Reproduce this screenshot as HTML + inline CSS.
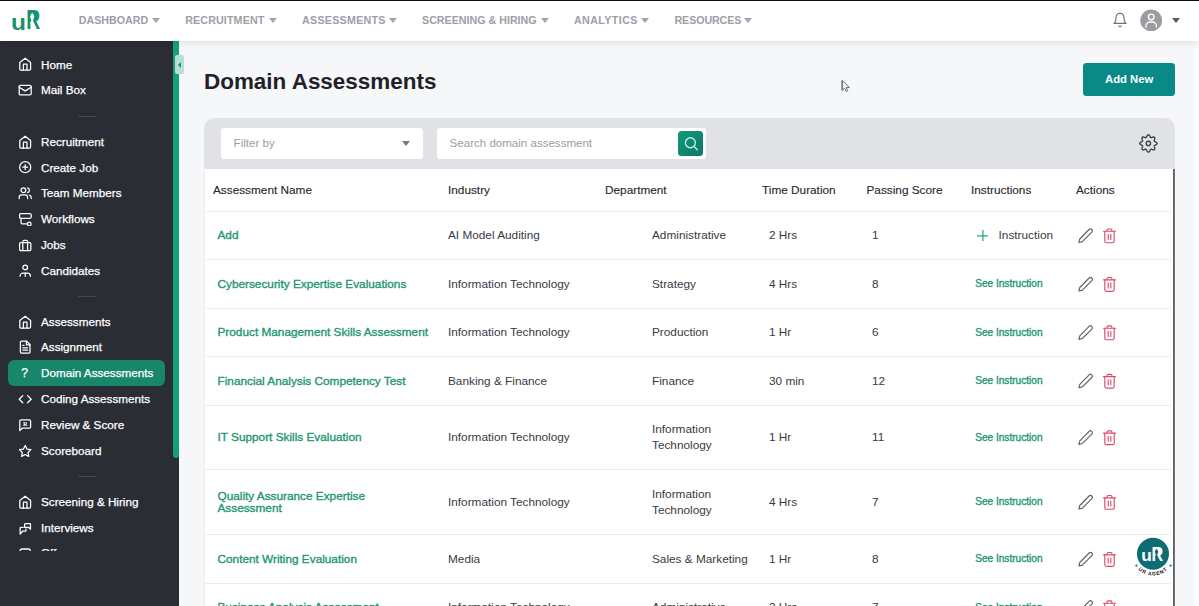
<!DOCTYPE html>
<html lang="en">
<head>
<meta charset="utf-8">
<title>Domain Assessments</title>
<style>
*{box-sizing:border-box;margin:0;padding:0}
html,body{width:1199px;height:606px;overflow:hidden}
body{position:relative;background:#f6f7f9;font-family:"Liberation Sans",sans-serif;color:#2a2c34}
.abs{position:absolute}
#topline{left:0;top:0;width:1199px;height:1px;background:#0c0c0e;z-index:9}
#rstrip{left:1194px;top:41px;width:5px;height:565px;background:#f9fafb}
#header{left:0;top:1px;width:1199px;height:40px;background:#fff;box-shadow:0 2px 7px rgba(0,0,0,.09);z-index:5}
.nav{position:absolute;top:12.2px;font-size:10.7px;font-weight:700;color:#9c9ea7;white-space:nowrap;line-height:14px}
.nav i{position:absolute;top:4.6px;margin-left:-.5px;width:0;height:0;border-left:4.1px solid transparent;border-right:4.1px solid transparent;border-top:5.2px solid #a3a5ad}
#logo{left:0;top:-1px;width:50px;height:41px}
#bell{left:1111.6px;top:10.8px;width:16px;height:16px;fill:none;stroke:#707074;stroke-width:1.75;stroke-linecap:round;stroke-linejoin:round}
#avatar{left:1139px;top:6px;width:24px;height:24px}
#ucaret{left:1171.6px;top:16.8px;width:0;height:0;border-left:4.1px solid transparent;border-right:4.1px solid transparent;border-top:5.4px solid #5a5a5e}
#sidebar{left:0;top:41px;width:179px;height:565px;background:#2b2d35;z-index:2}
#sblist{position:absolute;left:0;top:0;width:173px;height:510.2px;overflow:hidden}
.si{position:absolute;left:8px;width:157px;height:26px;border-radius:6px;color:#fff;font-size:11.7px;line-height:26px;white-space:nowrap;-webkit-text-stroke:.25px #fff}
.si span{position:absolute;left:33px;top:0}
.si svg{position:absolute;left:9.8px;top:5.9px;fill:none;stroke:#fff;stroke-width:2.1;stroke-linecap:round;stroke-linejoin:round}
.si .q{position:absolute;left:8.6px;top:0;width:16px;text-align:center;font-weight:400;font-size:12px}
.si.act{background:#17866b}
.sep{position:absolute;left:77.5px;width:18.5px;height:1px;background:#44474f}
#sbthumb{left:173px;top:41px;width:6px;height:417px;background:#13a07b;border-radius:0 0 3px 3px;z-index:3}
#toggle{left:175px;top:55px;width:9px;height:19px;background:#b7dfd3;border-radius:2px;z-index:6}
#toggle i{position:absolute;left:2.5px;top:6.5px;width:0;height:0;border-top:3px solid transparent;border-bottom:3px solid transparent;border-right:3.5px solid #17936f}
h1{left:204px;top:67.6px;font-size:22.45px;font-weight:700;color:#1f2129;line-height:28px;white-space:nowrap}
#addnew{left:1083px;top:62.5px;width:92.3px;height:33.4px;background:#0a8a87;border-radius:3.5px;color:#fff;font-weight:700;font-size:11.3px;line-height:33.4px;text-align:center}
#cursor{left:840px;top:79px;width:12px;height:15px;z-index:8}
#card{left:204px;top:118px;width:971.3px;height:500px;background:#fff;border-radius:10px 10px 0 0;overflow:hidden}
#bar{left:0;top:0;width:972px;height:50.5px;background:#e1e2e6}
.inp{position:absolute;top:10.4px;height:30.4px;background:#fff;border-radius:3px;font-size:11.55px;color:#9a9ca3;line-height:30.4px;padding-left:12.6px;white-space:nowrap}
#fcaret{left:197.5px;top:23.4px;width:0;height:0;border-left:4px solid transparent;border-right:4px solid transparent;border-top:5px solid #77797f}
#sbtn{left:474px;top:13px;width:25.2px;height:25.2px;border-radius:3.5px;background:linear-gradient(135deg,#13997b,#0b7868)}
#sbtn svg{position:absolute;left:4.6px;top:4.6px;width:16px;height:16px;fill:none;stroke:#c3f3e3;stroke-width:1.35;stroke-linecap:round}
#gear{left:934px;top:15px;width:20px;height:20px;fill:none;stroke:#3b3d43;stroke-width:1.35;stroke-linejoin:round}
.c{position:absolute;font-size:11.8px;color:#383a42;white-space:nowrap}
.th{color:#26282f;-webkit-text-stroke:.12px #26282f}
.nm{color:#1f9674;-webkit-text-stroke:.35px #1f9674}
.see{color:#1f9674;font-size:10.1px;margin-top:.5px;-webkit-text-stroke:.35px #1f9674}
.bd{position:absolute;left:0;width:967px;height:1px;background:#ebecef}
.ic{position:absolute;fill:none;stroke-width:1.15;stroke-linecap:round;stroke-linejoin:round}
.pen{stroke:#606165}
.tr{stroke:#de4a6b}
.plus{position:absolute;fill:none;stroke:#27a683;stroke-width:1.25;stroke-linecap:round}
#vline{left:969px;top:50.6px;width:2px;height:450px;background:linear-gradient(90deg,#58595c,#7a7b7e)}
#agent{left:1130px;top:533px;width:46px;height:46px;z-index:7}
</style>
</head>
<body>
<div id="topline" class="abs"></div>
<div id="rstrip" class="abs"></div>
<div id="header" class="abs">
  <svg id="logo" class="abs" viewBox="0 0 50 41" width="50" height="41">
    <text x="11" y="29.9" font-family="Liberation Sans,sans-serif" font-weight="700" font-size="22.3" fill="#17936f" textLength="15" lengthAdjust="spacingAndGlyphs">u</text>
    <text x="26.3" y="29.4" font-family="Liberation Sans,sans-serif" font-weight="700" font-size="27" fill="#17936f" textLength="14" lengthAdjust="spacingAndGlyphs">R</text>
    <path d="M30 12.5h7v8.6h-7z" fill="#17936f"/>
    <path d="M32.2 12.4L34.4 16.3 33.1 20.6 33.4 23.2H30.2L31.3 20.6 30 16.3z" fill="#fff"/>
  </svg>
  <div class="nav" style="left:78.8px">DASHBOARD<i style="left:73.8px"></i></div>
  <div class="nav" style="left:185.2px;letter-spacing:.13px">RECRUITMENT<i style="left:84.6px"></i></div>
  <div class="nav" style="left:302px;letter-spacing:.27px">ASSESSMENTS<i style="left:87.3px"></i></div>
  <div class="nav" style="left:422px">SCREENING &amp; HIRING<i style="left:119px"></i></div>
  <div class="nav" style="left:574px;letter-spacing:.4px">ANALYTICS<i style="left:67px"></i></div>
  <div class="nav" style="left:674.5px;letter-spacing:-.1px">RESOURCES<i style="left:70.3px"></i></div>
  <svg id="bell" class="abs" viewBox="0 0 24 24"><path d="M6 8a6 6 0 0 1 12 0c0 7 3 9 3 9H3s3-2 3-9"/><path d="M10.3 21a1.94 1.94 0 0 0 3.4 0"/></svg>
  <svg id="avatar" class="abs" viewBox="0 0 24 24"><circle cx="12.2" cy="13.4" r="10.9" fill="#9a9ca0"/><g transform="translate(4.2 5.3) scale(.667)" fill="none" stroke="#fff" stroke-width="2" stroke-linecap="round"><circle cx="12" cy="7" r="4.2"/><path d="M4.2 22.2v-1.7a6 6 0 0 1 6-6h3.6a6 6 0 0 1 6 6v1.7"/></g></svg>
  <div id="ucaret" class="abs"></div>
</div>
<div id="sidebar" class="abs">
  <div id="sblist">
    <div class="si" style="top:10.60px"><svg viewBox="0 0 24 24" width="14.4" height="14.4" ><path d="m3 9 9-7 9 7v11a2 2 0 0 1-2 2H5a2 2 0 0 1-2-2z"/><path d="M9 22V12h6v10"/></svg><span>Home</span></div>
    <div class="si" style="top:36.34px"><svg viewBox="0 0 24 24" width="14.4" height="14.4" ><rect width="20" height="16" x="2" y="4" rx="2"/><path d="m22 7-8.97 5.7a1.94 1.94 0 0 1-2.06 0L2 7"/></svg><span>Mail Box</span></div>
    <div class="si" style="top:87.83px"><svg viewBox="0 0 24 24" width="14.4" height="14.4" ><path d="m3 9 9-7 9 7v11a2 2 0 0 1-2 2H5a2 2 0 0 1-2-2z"/><path d="M9 22V12h6v10"/></svg><span>Recruitment</span></div>
    <div class="si" style="top:113.58px"><svg viewBox="0 0 24 24" width="14.4" height="14.4" ><circle cx="12" cy="12" r="9.2"/><path d="M8 12h8"/><path d="M12 8v8"/></svg><span>Create Job</span></div>
    <div class="si" style="top:139.32px"><svg viewBox="0 0 24 24" width="14.4" height="14.4" ><path d="M16 21v-2a4 4 0 0 0-4-4H6a4 4 0 0 0-4 4v2"/><circle cx="9" cy="7" r="4"/><path d="M22 21v-2a4 4 0 0 0-3-3.87"/><path d="M16 3.13a4 4 0 0 1 0 7.75"/></svg><span>Team Members</span></div>
    <div class="si" style="top:165.07px"><svg viewBox="0 0 24 24" width="14.4" height="14.4" ><rect x="2.7" y="2.8" width="19.3" height="7.7" rx="2"/><path d="M5 10.5v7a2.5 2.5 0 0 0 2.5 2.5h8"/><circle cx="18.8" cy="20" r="3"/></svg><span>Workflows</span></div>
    <div class="si" style="top:190.81px"><svg viewBox="0 0 24 24" width="14.4" height="14.4" ><rect width="18.7" height="13.5" x="2.7" y="7.7" rx="2"/><path d="M16 21V6a2 2 0 0 0-2-2h-4a2 2 0 0 0-2 2v15"/></svg><span>Jobs</span></div>
    <div class="si" style="top:216.56px"><svg viewBox="0 0 24 24" width="14.4" height="14.4" ><circle cx="12" cy="7.3" r="3.9"/><path d="M3.3 22.3V22a5 5 0 0 1 5-5h7.4a5 5 0 0 1 5 5v.3"/><path d="M12 17v5.3"/></svg><span>Candidates</span></div>
    <div class="si" style="top:268.05px"><svg viewBox="0 0 24 24" width="14.4" height="14.4" ><path d="m3 9 9-7 9 7v11a2 2 0 0 1-2 2H5a2 2 0 0 1-2-2z"/><path d="M9 22V12h6v10"/></svg><span>Assessments</span></div>
    <div class="si" style="top:293.19px"><svg viewBox="0 0 24 24" width="14.4" height="14.4" ><path d="M14.5 2H6a2 2 0 0 0-2 2v16a2 2 0 0 0 2 2h12a2 2 0 0 0 2-2V7.5L14.5 2z"/><path d="M14 2v6h6"/><path d="M16 13H8"/><path d="M16 17H8"/><path d="M10 9H8"/></svg><span>Assignment</span></div>
    <div class="si act" style="top:318.94px"><b class="q">?</b><span>Domain Assessments</span></div>
    <div class="si" style="top:345.28px"><svg viewBox="0 0 24 24" width="14.4" height="14.4" ><path d="m16 18 6-6-6-6"/><path d="m8 6-6 6 6 6"/></svg><span>Coding Assessments</span></div>
    <div class="si" style="top:371.03px"><svg viewBox="0 0 24 24" width="14.4" height="14.4" ><path d="M21 15a2 2 0 0 1-2 2H7l-4 4V5a2 2 0 0 1 2-2h14a2 2 0 0 1 2 2z"/><text x="12" y="13.8" text-anchor="middle" font-family="Liberation Serif,serif" font-size="10.5" font-weight="700" fill="#fff" stroke="none">R</text></svg><span>Review &amp; Score</span></div>
    <div class="si" style="top:396.77px"><svg viewBox="0 0 24 24" width="14.4" height="14.4" ><path d="M12 2.5l2.95 5.98 6.6.96-4.78 4.65 1.13 6.57L12 17.56 6.1 20.66l1.13-6.57L2.45 9.44l6.6-.96z"/></svg><span>Scoreboard</span></div>
    <div class="si" style="top:448.26px"><svg viewBox="0 0 24 24" width="14.4" height="14.4" ><path d="m3 9 9-7 9 7v11a2 2 0 0 1-2 2H5a2 2 0 0 1-2-2z"/><path d="M9 22V12h6v10"/></svg><span>Screening &amp; Hiring</span></div>
    <div class="si" style="top:474.01px"><svg viewBox="0 0 24 24" width="14.4" height="14.4" ><path d="M12 4.5h7.8a1 1 0 0 1 1 1v8.3l-3-3H12a1 1 0 0 1-1-1V5.5a1 1 0 0 1 1-1z"/><path d="M8.6 10.7h-4a1 1 0 0 0-1 1v10l4.6-5h4.1a1 1 0 0 0 1-1v-2.5"/></svg><span>Interviews</span></div>
    <div class="si" style="top:499.15px"><svg viewBox="0 0 24 24" width="14.4" height="14.4" ><rect x="3.5" y="5" width="17" height="14" rx="3"/></svg><span>Offers</span></div>
    <div class="sep" style="top:74.89px"></div>
    <div class="sep" style="top:255.11px"></div>
    <div class="sep" style="top:435.32px"></div>
  </div>
</div>
<div id="sbthumb" class="abs"></div>
<div id="toggle" class="abs"><i></i></div>
<h1 class="abs">Domain Assessments</h1>
<div id="addnew" class="abs">Add New</div>
<svg id="cursor" class="abs" viewBox="0 0 12 15"><path d="M2.1 1.4V11.4L4.6 9.2l1.7 3.3 1.5-.8L6.2 8.6l3.2-.1z" fill="#fafbfc" stroke="#6a6b6f" stroke-width="1" stroke-linejoin="round"/><path d="M2.2 1.6V11.2" stroke="#6e6f73" stroke-width="1.2"/></svg>
<div id="card" class="abs">
  <div id="bar" class="abs">
    <div class="inp" style="left:17px;width:202px">Filter by</div>
    <div id="fcaret" class="abs"></div>
    <div class="inp" style="left:233px;width:268.6px">Search domain assessment</div>
    <div id="sbtn" class="abs"><svg viewBox="0 0 16 16"><circle cx="7.4" cy="6.7" r="5"/><path d="M11.1 10.4l3.2 3.4"/></svg></div>
    <svg id="gear" class="abs" viewBox="0 0 20 20"><path d="M10.40 1.72 L10.74 1.82 L11.06 2.04 L11.36 2.34 L11.62 2.72 L11.85 3.12 L12.05 3.53 L12.24 3.91 L12.41 4.22 L12.60 4.46 L12.81 4.60 L13.06 4.65 L13.36 4.61 L13.71 4.52 L14.10 4.38 L14.53 4.23 L14.99 4.11 L15.44 4.03 L15.86 4.03 L16.24 4.10 L16.55 4.27 L16.72 4.58 L16.79 4.96 L16.79 5.38 L16.71 5.83 L16.59 6.29 L16.44 6.72 L16.30 7.11 L16.21 7.46 L16.17 7.76 L16.22 8.01 L16.36 8.22 L16.60 8.41 L16.91 8.58 L17.29 8.77 L17.70 8.97 L18.10 9.20 L18.48 9.46 L18.78 9.76 L19.00 10.08 L19.10 10.42 L19.00 10.76 L18.78 11.08 L18.48 11.38 L18.10 11.64 L17.70 11.87 L17.29 12.07 L16.91 12.26 L16.60 12.43 L16.36 12.62 L16.22 12.83 L16.17 13.08 L16.21 13.38 L16.30 13.73 L16.44 14.12 L16.59 14.55 L16.71 15.01 L16.79 15.46 L16.79 15.88 L16.72 16.26 L16.55 16.57 L16.24 16.74 L15.86 16.81 L15.44 16.81 L14.99 16.73 L14.53 16.61 L14.10 16.46 L13.71 16.32 L13.36 16.23 L13.06 16.19 L12.81 16.24 L12.60 16.38 L12.41 16.62 L12.24 16.93 L12.05 17.31 L11.85 17.72 L11.62 18.12 L11.36 18.50 L11.06 18.80 L10.74 19.02 L10.40 19.12 L10.06 19.02 L9.74 18.80 L9.44 18.50 L9.18 18.12 L8.95 17.72 L8.75 17.31 L8.56 16.93 L8.39 16.62 L8.20 16.38 L7.99 16.24 L7.74 16.19 L7.44 16.23 L7.09 16.32 L6.70 16.46 L6.27 16.61 L5.81 16.73 L5.36 16.81 L4.94 16.81 L4.56 16.74 L4.25 16.57 L4.08 16.26 L4.01 15.88 L4.01 15.46 L4.09 15.01 L4.21 14.55 L4.36 14.12 L4.50 13.73 L4.59 13.38 L4.63 13.08 L4.58 12.83 L4.44 12.62 L4.20 12.43 L3.89 12.26 L3.51 12.07 L3.10 11.87 L2.70 11.64 L2.32 11.38 L2.02 11.08 L1.80 10.76 L1.70 10.42 L1.80 10.08 L2.02 9.76 L2.32 9.46 L2.70 9.20 L3.10 8.97 L3.51 8.77 L3.89 8.58 L4.20 8.41 L4.44 8.22 L4.58 8.01 L4.63 7.76 L4.59 7.46 L4.50 7.11 L4.36 6.72 L4.21 6.29 L4.09 5.83 L4.01 5.38 L4.01 4.96 L4.08 4.58 L4.25 4.27 L4.56 4.10 L4.94 4.03 L5.36 4.03 L5.81 4.11 L6.27 4.23 L6.70 4.38 L7.09 4.52 L7.44 4.61 L7.74 4.65 L7.99 4.60 L8.20 4.46 L8.39 4.22 L8.56 3.91 L8.75 3.53 L8.95 3.12 L9.18 2.72 L9.44 2.34 L9.74 2.04 L10.06 1.82 L10.40 1.72Z"/><circle cx="10.4" cy="10.42" r="2.15"/></svg>
  </div>
  <div class="abs" style="left:0;top:50px;width:1px;height:450px;background:#ebecef"></div>
  <div class="bd" style="top:92.75px"></div>
    <div class="c th" style="left:9px;top:63.52px;line-height:16.2px">Assessment Name</div>
    <div class="c th" style="left:244px;top:63.52px;line-height:16.2px">Industry</div>
    <div class="c th" style="left:401px;top:63.52px;line-height:16.2px">Department</div>
    <div class="c th" style="left:558px;top:63.52px;line-height:16.2px">Time Duration</div>
    <div class="c th" style="left:662.5px;top:63.52px;line-height:16.2px">Passing Score</div>
    <div class="c th" style="left:767px;top:63.52px;line-height:16.2px">Instructions</div>
    <div class="c th" style="left:872px;top:63.52px;line-height:16.2px">Actions</div>
    <div class="c nm" style="left:13.5px;top:109.43px;line-height:16.2px">Add</div>
    <div class="c " style="left:244px;top:109.43px;line-height:16.2px">AI Model Auditing</div>
    <div class="c " style="left:448px;top:109.43px;line-height:16.2px">Administrative</div>
    <div class="c " style="left:565px;top:109.43px;line-height:16.2px">2 Hrs</div>
    <div class="c " style="left:668px;top:109.43px;line-height:16.2px">1</div>
    <svg class="plus" style="left:772.7px;top:111.62px" viewBox="0 0 12 12" width="11.8" height="11.8"><path d="M6 .3v11.4M.3 6h11.4"/></svg>
    <div class="c " style="left:794.6px;top:109.43px;line-height:16.2px">Instruction</div>
    <svg class="ic pen" style="left:873px;top:109px" viewBox="0 0 18 18" width="18" height="18"><g transform="translate(0.50 0.58)"><path d="M11.6 1.9a1.9 1.9 0 0 1 2.7 2.7L4.9 14 1.4 14.9l.9-3.5z"/></g></svg>
    <svg class="ic tr" style="left:897px;top:109px" viewBox="0 0 18 18" width="18" height="18"><g transform="translate(0.50 0.37)"><path d="M2 3.9h12"/><path d="M5.6 3.7V2.6a1 1 0 0 1 1-1h2.8a1 1 0 0 1 1 1v1.1"/><path d="M3.3 4v9.9a1.5 1.5 0 0 0 1.5 1.5h6.4a1.5 1.5 0 0 0 1.5-1.5V4"/><path d="M6.7 7.2v4.9"/><path d="M9.3 7.2v4.9"/></g></svg>
    <div class="bd" style="top:141.30px"></div>
    <div class="c nm" style="left:13.5px;top:157.95px;line-height:16.2px">Cybersecurity Expertise Evaluations</div>
    <div class="c " style="left:244px;top:157.95px;line-height:16.2px">Information Technology</div>
    <div class="c " style="left:448px;top:157.95px;line-height:16.2px">Strategy</div>
    <div class="c " style="left:565px;top:157.95px;line-height:16.2px">4 Hrs</div>
    <div class="c " style="left:668px;top:157.95px;line-height:16.2px">8</div>
    <div class="c see" style="left:771.2px;top:157.95px;line-height:16.2px">See Instruction</div>
    <svg class="ic pen" style="left:873px;top:158px" viewBox="0 0 18 18" width="18" height="18"><g transform="translate(0.50 0.10)"><path d="M11.6 1.9a1.9 1.9 0 0 1 2.7 2.7L4.9 14 1.4 14.9l.9-3.5z"/></g></svg>
    <svg class="ic tr" style="left:897px;top:157px" viewBox="0 0 18 18" width="18" height="18"><g transform="translate(0.50 0.90)"><path d="M2 3.9h12"/><path d="M5.6 3.7V2.6a1 1 0 0 1 1-1h2.8a1 1 0 0 1 1 1v1.1"/><path d="M3.3 4v9.9a1.5 1.5 0 0 0 1.5 1.5h6.4a1.5 1.5 0 0 0 1.5-1.5V4"/><path d="M6.7 7.2v4.9"/><path d="M9.3 7.2v4.9"/></g></svg>
    <div class="bd" style="top:189.80px"></div>
    <div class="c nm" style="left:13.5px;top:206.35px;line-height:16.2px">Product Management Skills Assessment</div>
    <div class="c " style="left:244px;top:206.35px;line-height:16.2px">Information Technology</div>
    <div class="c " style="left:448px;top:206.35px;line-height:16.2px">Production</div>
    <div class="c " style="left:565px;top:206.35px;line-height:16.2px">1 Hr</div>
    <div class="c " style="left:668px;top:206.35px;line-height:16.2px">6</div>
    <div class="c see" style="left:771.2px;top:206.35px;line-height:16.2px">See Instruction</div>
    <svg class="ic pen" style="left:873px;top:206px" viewBox="0 0 18 18" width="18" height="18"><g transform="translate(0.50 0.50)"><path d="M11.6 1.9a1.9 1.9 0 0 1 2.7 2.7L4.9 14 1.4 14.9l.9-3.5z"/></g></svg>
    <svg class="ic tr" style="left:897px;top:206px" viewBox="0 0 18 18" width="18" height="18"><g transform="translate(0.50 0.30)"><path d="M2 3.9h12"/><path d="M5.6 3.7V2.6a1 1 0 0 1 1-1h2.8a1 1 0 0 1 1 1v1.1"/><path d="M3.3 4v9.9a1.5 1.5 0 0 0 1.5 1.5h6.4a1.5 1.5 0 0 0 1.5-1.5V4"/><path d="M6.7 7.2v4.9"/><path d="M9.3 7.2v4.9"/></g></svg>
    <div class="bd" style="top:238.10px"></div>
    <div class="c nm" style="left:13.5px;top:254.75px;line-height:16.2px">Financial Analysis Competency Test</div>
    <div class="c " style="left:244px;top:254.75px;line-height:16.2px">Banking &amp; Finance</div>
    <div class="c " style="left:448px;top:254.75px;line-height:16.2px">Finance</div>
    <div class="c " style="left:565px;top:254.75px;line-height:16.2px">30 min</div>
    <div class="c " style="left:668px;top:254.75px;line-height:16.2px">12</div>
    <div class="c see" style="left:771.2px;top:254.75px;line-height:16.2px">See Instruction</div>
    <svg class="ic pen" style="left:873px;top:254px" viewBox="0 0 18 18" width="18" height="18"><g transform="translate(0.50 0.90)"><path d="M11.6 1.9a1.9 1.9 0 0 1 2.7 2.7L4.9 14 1.4 14.9l.9-3.5z"/></g></svg>
    <svg class="ic tr" style="left:897px;top:254px" viewBox="0 0 18 18" width="18" height="18"><g transform="translate(0.50 0.70)"><path d="M2 3.9h12"/><path d="M5.6 3.7V2.6a1 1 0 0 1 1-1h2.8a1 1 0 0 1 1 1v1.1"/><path d="M3.3 4v9.9a1.5 1.5 0 0 0 1.5 1.5h6.4a1.5 1.5 0 0 0 1.5-1.5V4"/><path d="M6.7 7.2v4.9"/><path d="M9.3 7.2v4.9"/></g></svg>
    <div class="bd" style="top:286.60px"></div>
    <div class="c nm" style="left:13.5px;top:311.30px;line-height:16.2px">IT Support Skills Evaluation</div>
    <div class="c " style="left:244px;top:311.30px;line-height:16.2px">Information Technology</div>
    <div class="c " style="left:448px;top:303.20px;line-height:16.2px">Information<br>Technology</div>
    <div class="c " style="left:565px;top:311.30px;line-height:16.2px">1 Hr</div>
    <div class="c " style="left:668px;top:311.30px;line-height:16.2px">11</div>
    <div class="c see" style="left:771.2px;top:311.30px;line-height:16.2px">See Instruction</div>
    <svg class="ic pen" style="left:873px;top:311px" viewBox="0 0 18 18" width="18" height="18"><g transform="translate(0.50 0.45)"><path d="M11.6 1.9a1.9 1.9 0 0 1 2.7 2.7L4.9 14 1.4 14.9l.9-3.5z"/></g></svg>
    <svg class="ic tr" style="left:897px;top:311px" viewBox="0 0 18 18" width="18" height="18"><g transform="translate(0.50 0.25)"><path d="M2 3.9h12"/><path d="M5.6 3.7V2.6a1 1 0 0 1 1-1h2.8a1 1 0 0 1 1 1v1.1"/><path d="M3.3 4v9.9a1.5 1.5 0 0 0 1.5 1.5h6.4a1.5 1.5 0 0 0 1.5-1.5V4"/><path d="M6.7 7.2v4.9"/><path d="M9.3 7.2v4.9"/></g></svg>
    <div class="bd" style="top:351.20px"></div>
    <div class="c nm" style="left:13.5px;top:373.35px;line-height:11.5px">Quality Assurance Expertise<br>Assessment</div>
    <div class="c " style="left:244px;top:375.95px;line-height:16.2px">Information Technology</div>
    <div class="c " style="left:448px;top:367.85px;line-height:16.2px">Information<br>Technology</div>
    <div class="c " style="left:565px;top:375.95px;line-height:16.2px">4 Hrs</div>
    <div class="c " style="left:668px;top:375.95px;line-height:16.2px">7</div>
    <div class="c see" style="left:771.2px;top:375.95px;line-height:16.2px">See Instruction</div>
    <svg class="ic pen" style="left:873px;top:376px" viewBox="0 0 18 18" width="18" height="18"><g transform="translate(0.50 0.10)"><path d="M11.6 1.9a1.9 1.9 0 0 1 2.7 2.7L4.9 14 1.4 14.9l.9-3.5z"/></g></svg>
    <svg class="ic tr" style="left:897px;top:375px" viewBox="0 0 18 18" width="18" height="18"><g transform="translate(0.50 0.90)"><path d="M2 3.9h12"/><path d="M5.6 3.7V2.6a1 1 0 0 1 1-1h2.8a1 1 0 0 1 1 1v1.1"/><path d="M3.3 4v9.9a1.5 1.5 0 0 0 1.5 1.5h6.4a1.5 1.5 0 0 0 1.5-1.5V4"/><path d="M6.7 7.2v4.9"/><path d="M9.3 7.2v4.9"/></g></svg>
    <div class="bd" style="top:415.90px"></div>
    <div class="c nm" style="left:13.5px;top:432.95px;line-height:16.2px">Content Writing Evaluation</div>
    <div class="c " style="left:244px;top:432.95px;line-height:16.2px">Media</div>
    <div class="c " style="left:448px;top:432.95px;line-height:16.2px">Sales &amp; Marketing</div>
    <div class="c " style="left:565px;top:432.95px;line-height:16.2px">1 Hr</div>
    <div class="c " style="left:668px;top:432.95px;line-height:16.2px">8</div>
    <div class="c see" style="left:771.2px;top:432.95px;line-height:16.2px">See Instruction</div>
    <svg class="ic pen" style="left:873px;top:433px" viewBox="0 0 18 18" width="18" height="18"><g transform="translate(0.50 0.10)"><path d="M11.6 1.9a1.9 1.9 0 0 1 2.7 2.7L4.9 14 1.4 14.9l.9-3.5z"/></g></svg>
    <svg class="ic tr" style="left:897px;top:432px" viewBox="0 0 18 18" width="18" height="18"><g transform="translate(0.50 0.90)"><path d="M2 3.9h12"/><path d="M5.6 3.7V2.6a1 1 0 0 1 1-1h2.8a1 1 0 0 1 1 1v1.1"/><path d="M3.3 4v9.9a1.5 1.5 0 0 0 1.5 1.5h6.4a1.5 1.5 0 0 0 1.5-1.5V4"/><path d="M6.7 7.2v4.9"/><path d="M9.3 7.2v4.9"/></g></svg>
    <div class="bd" style="top:465.20px"></div>
    <div class="c nm" style="left:13.5px;top:481.35px;line-height:16.2px">Business Analysis Assessment</div>
    <div class="c " style="left:244px;top:481.35px;line-height:16.2px">Information Technology</div>
    <div class="c " style="left:448px;top:481.35px;line-height:16.2px">Administrative</div>
    <div class="c " style="left:565px;top:481.35px;line-height:16.2px">2 Hrs</div>
    <div class="c " style="left:668px;top:481.35px;line-height:16.2px">7</div>
    <div class="c see" style="left:771.2px;top:481.35px;line-height:16.2px">See Instruction</div>
    <svg class="ic pen" style="left:873px;top:481px" viewBox="0 0 18 18" width="18" height="18"><g transform="translate(0.50 0.50)"><path d="M11.6 1.9a1.9 1.9 0 0 1 2.7 2.7L4.9 14 1.4 14.9l.9-3.5z"/></g></svg>
    <svg class="ic tr" style="left:897px;top:481px" viewBox="0 0 18 18" width="18" height="18"><g transform="translate(0.50 0.30)"><path d="M2 3.9h12"/><path d="M5.6 3.7V2.6a1 1 0 0 1 1-1h2.8a1 1 0 0 1 1 1v1.1"/><path d="M3.3 4v9.9a1.5 1.5 0 0 0 1.5 1.5h6.4a1.5 1.5 0 0 0 1.5-1.5V4"/><path d="M6.7 7.2v4.9"/><path d="M9.3 7.2v4.9"/></g></svg>
    <div class="bd" style="top:512.70px"></div>
  <div id="vline" class="abs"></div>
</div>
<svg id="agent" class="abs" viewBox="0 0 46 46">
  <defs><path id="arc" d="M1.2 20.7A21.8 21.8 0 0 0 44.8 20.7"/></defs>
  <circle cx="23" cy="20.7" r="16" fill="#0f6b74"/>
  <text x="11.2" y="27.9" font-family="Liberation Sans,sans-serif" font-weight="700" font-size="16.6" fill="#fff" textLength="10.6" lengthAdjust="spacingAndGlyphs">u</text>
  <text x="21.6" y="27.9" font-family="Liberation Sans,sans-serif" font-weight="700" font-size="19.4" fill="#fff" textLength="11.7" lengthAdjust="spacingAndGlyphs">R</text>
  <path d="M24.7 15.9h5.6v6.1h-5.6z" fill="#fff"/>
  <path d="M26.55 15.7L28.4 18.6 27.3 21.7 27.55 23.6H24.9L25.8 21.7 24.7 18.6z" fill="#0f6b74"/>
  <text font-family="Liberation Sans,sans-serif" font-weight="700" font-size="5.1" fill="#15161a" letter-spacing=".75"><textPath href="#arc" startOffset="50%" text-anchor="middle">UR AGENT</textPath></text>
  <path d="M6.4 30.6l.6 1.4 1.4.6-1.4.6-.6 1.4-.6-1.4-1.4-.6 1.4-.6z" fill="#1fa3a0"/>
  <path d="M40.6 30.6l.6 1.4 1.4.6-1.4.6-.6 1.4-.6-1.4-1.4-.6 1.4-.6z" fill="#1fa3a0"/>
</svg>
</body>
</html>
